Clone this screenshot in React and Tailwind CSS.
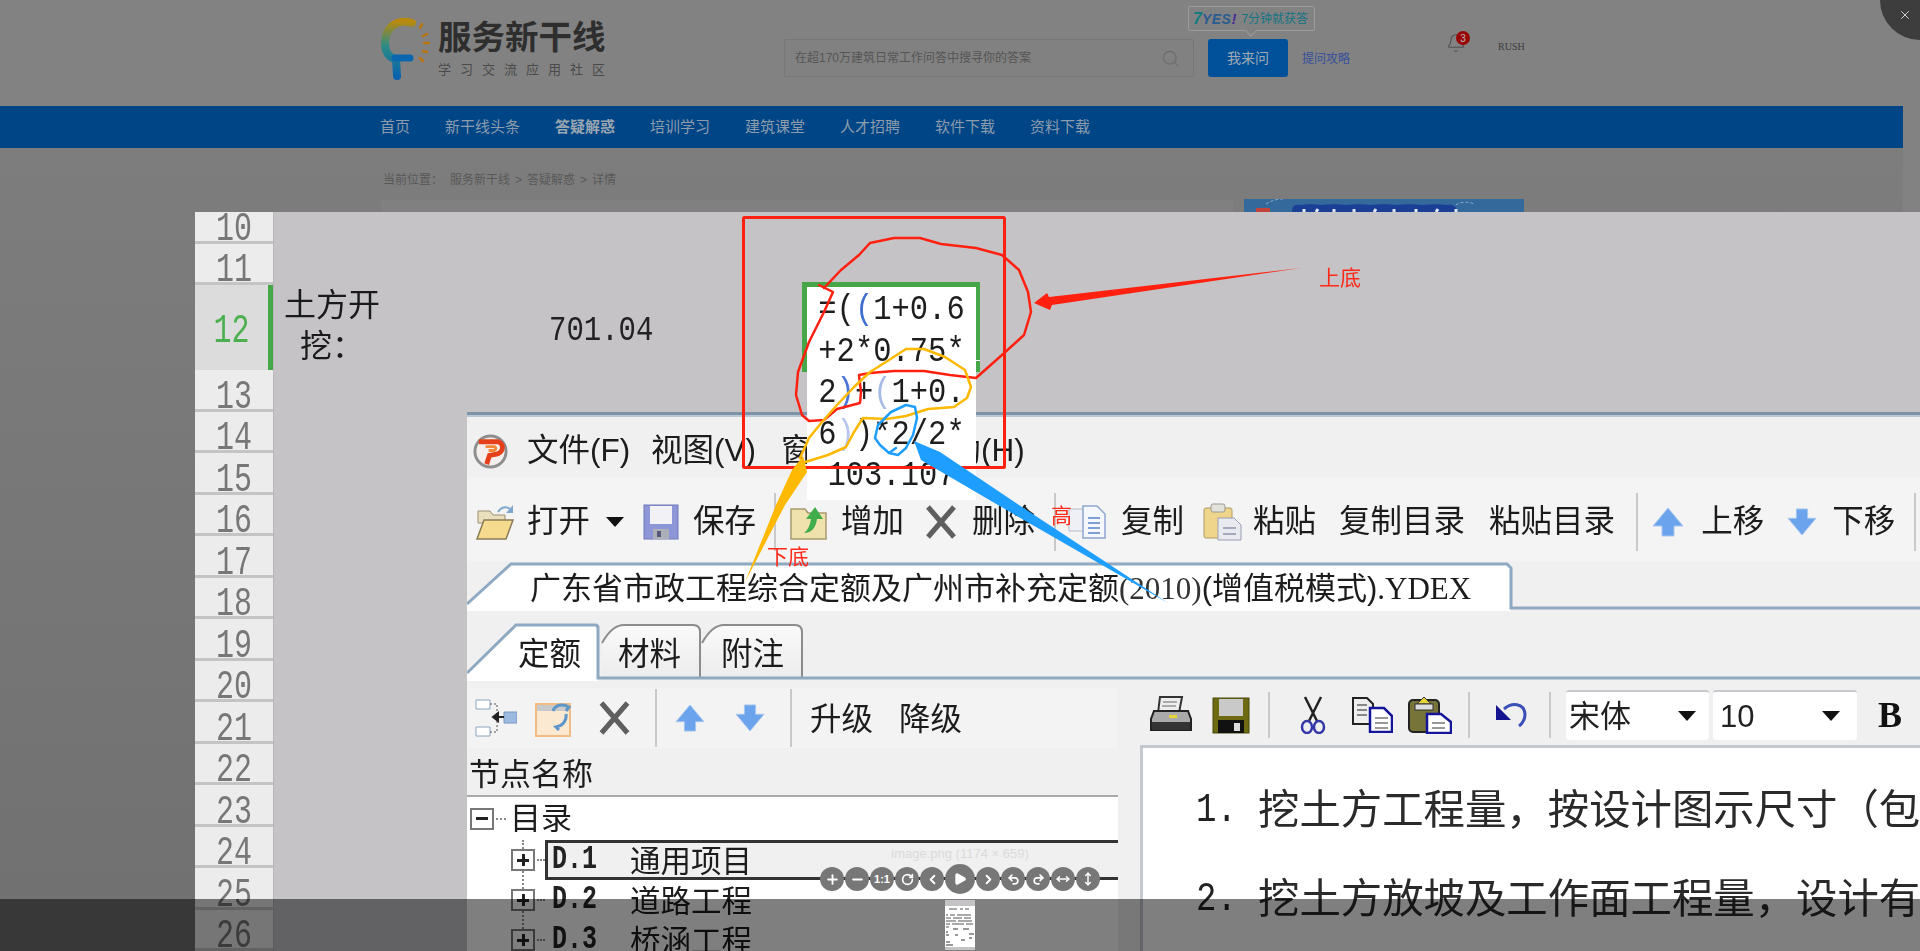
import React from "react"
import { Bell, ChevronLeft, ChevronRight, Minus, MoveHorizontal, MoveVertical, Play, Plus, Redo2, RotateCw, Search, Undo2, X } from "lucide-react"

const navItems = ["首页", "新干线头条", "答疑解惑", "培训学习", "建筑课堂", "人才招聘", "软件下载", "资料下载"]

// heights come from the spreadsheet rows in the picture
const sheetRows = [
  { n: 10, h: "h-[32px]" },
  { n: 11, h: "h-[41px]" },
  { n: 12, h: "h-[85px]", active: true },
  ...[13, 14, 15, 16, 17, 18, 19, 20, 21, 22, 23, 24, 25, 26].map((n) => ({ n, h: "h-[41.5px]" })),
]

const redLoop = "819,285 833,292 824,312 809,342 798,372 796,395 802,415 809,421 824,420 837,409 860,403 861,392 859,375 870,373 894,371 924,371 950,375 976,378 1002,355 1024,335 1031,312 1028,292 1019,270 1002,255 976,248 941,244 920,238 894,238 870,243 859,255 841,270 824,288"
const orangeLoop = "802,463 828,455 846,447 854,432 863,418 887,419 906,416 928,409 954,407 967,398 971,387 965,370 945,357 924,349 906,349 889,360 870,372 854,387 837,405 822,422 809,438 800,458"
const blueLoop = "896,448 889,453 880,445 875,438 878,425 891,412 906,405 915,407 917,418 913,435 906,448 898,455 889,453"

const Sep = ({ className = "" }) => <div className={`w-[2px] shrink-0 bg-[#c9c9c9] ${className}`} />

const Tool = ({ children, className = "" }) => (
  <span className={`shrink-0 text-[31.5px] leading-none whitespace-nowrap text-[#1c1c1c] ${className}`}>{children}</span>
)

const OpenIcon = ({ className }) => (
  <svg className={className} viewBox="0 0 40 38">
    <path d="M3 8h12l3 4h12v8H3z" fill="#e9dfbd" stroke="#9b9070" />
    <path d="M2 36 9 17h29l-7 19z" fill="#f6db8f" stroke="#8b7c55" strokeWidth="1.5" />
    <path d="M23 9c3-5 8-6 12-3" fill="none" stroke="#7fa8cf" strokeWidth="2" />
    <path d="M38 2v8h-7z" fill="#7fa8cf" />
  </svg>
)

const BlueDisk = ({ className }) => (
  <svg className={className} viewBox="0 0 36 36">
    <rect x="1" y="1" width="34" height="34" fill="#8d97d8" stroke="#7078b8" />
    <rect x="7" y="2" width="22" height="18" fill="#f2f2f6" />
    <rect x="10" y="25" width="16" height="10" fill="#aeb0b8" />
    <rect x="14" y="27" width="4" height="6" fill="#555a78" />
  </svg>
)

const AddIcon = ({ className }) => (
  <svg className={className} viewBox="0 0 40 38">
    <path d="M2 6h14l3 4h18v26H2z" fill="#efe2ad" stroke="#a89a70" strokeWidth="1.5" />
    <path d="M15 30c8 0 12-6 13-14h6L26 4l-9 12h5c-1 6-3 11-7 14z" fill="#3fae4a" />
  </svg>
)

const CrossIcon = ({ className }) => (
  <svg className={className} viewBox="0 0 32 34">
    <path d="M3 2l26 30M29 2 3 32" stroke="#5f5f5f" strokeWidth="5" />
  </svg>
)

const CopyDoc = ({ className }) => (
  <svg className={className} viewBox="0 0 40 36">
    <path d="M2 5h18v22H2z" fill="#eef0f6" stroke="#b6bccb" />
    <path d="M16 2h14l8 8v24H16z" fill="#f4f7fd" stroke="#8ea7cf" strokeWidth="1.5" />
    <path d="M21 14h12M21 19h12M21 24h12M21 29h12" stroke="#7f9fd6" strokeWidth="2" />
  </svg>
)

const PasteIcon = ({ className }) => (
  <svg className={className} viewBox="0 0 41 38">
    <rect x="2" y="5" width="28" height="30" rx="2" fill="#efd48c" stroke="#ad9a62" />
    <rect x="9" y="1" width="14" height="8" rx="2" fill="#e2e2dc" stroke="#9b9b8e" />
    <path d="M16 15h16l7 7v15H16z" fill="#e9eaf0" stroke="#9a9eb0" />
    <path d="M21 25h13M21 31h13" stroke="#a6aabd" strokeWidth="2" />
  </svg>
)

const ArrowUp = ({ className }) => (
  <svg className={className} viewBox="0 0 32 30">
    <path d="M16 1 31 19H22V29H10V19H1z" fill="#6ba4ec" stroke="#a9c7ee" />
  </svg>
)

const ArrowDown = ({ className }) => (
  <svg className={className} viewBox="0 0 32 30">
    <path d="M16 29 1 11H10V1H22V11H31z" fill="#6ba4ec" stroke="#a9c7ee" />
  </svg>
)

const TreeIcon = ({ className }) => (
  <svg className={className} viewBox="0 0 42 38">
    <path d="M1 1h14v9H1zM1 28h14v9H1z" fill="#fff" stroke="#8aa4c0" />
    <path d="M15 5h7v28h-7" fill="none" stroke="#555" strokeDasharray="2 2" />
    <path d="M29 13h13v11H29z" fill="#9dbbe0" stroke="#7796bd" />
    <path d="M18 18h11M18 18l5-4v8z" stroke="#222" fill="#222" strokeWidth="2" />
  </svg>
)

const RefreshDoc = ({ className }) => (
  <svg className={className} viewBox="0 0 39 38">
    <rect x="1" y="5" width="34" height="32" fill="#fbe9d2" stroke="#f1bd84" strokeWidth="2" />
    <rect x="2" y="6" width="32" height="6" fill="#c9c9c9" />
    <path d="M18 12c2-6 9-8 16-4l-3 4M31 15c1 6-3 12-10 13l3 3" fill="none" stroke="#5f96c8" strokeWidth="3" />
  </svg>
)

const Printer = ({ className }) => (
  <svg className={className} viewBox="0 0 42 38">
    <path d="M10 1h22l-3 16H8z" fill="#eee" stroke="#333" strokeWidth="2" />
    <path d="M13 6h14M12 10h14" stroke="#666" />
    <path d="M4 15h34l3 8v11H1V23z" fill="#aaa" stroke="#222" strokeWidth="2" />
    <path d="M2 26h38v8H2z" fill="#333" />
    <rect x="19" y="19" width="8" height="3" fill="#e6d23a" />
  </svg>
)

const DarkDisk = ({ className }) => (
  <svg className={className} viewBox="0 0 38 37">
    <rect x="1" y="1" width="36" height="35" fill="#6d6a12" stroke="#4b4908" />
    <rect x="7" y="2" width="24" height="17" fill="#c9c9c9" />
    <rect x="6" y="23" width="26" height="13" fill="#111" />
    <rect x="22" y="26" width="6" height="8" fill="#ddd" />
  </svg>
)

const Scissors = ({ className }) => (
  <svg className={className} viewBox="0 0 26 38">
    <path d="M5 1l12 24M21 1 9 25" stroke="#222" strokeWidth="2.5" />
    <ellipse cx="7" cy="31" rx="5" ry="6" fill="none" stroke="#3538a8" strokeWidth="2.5" />
    <ellipse cx="19" cy="31" rx="5" ry="6" fill="none" stroke="#3538a8" strokeWidth="2.5" />
  </svg>
)

const BlueCopy = ({ className }) => (
  <svg className={className} viewBox="0 0 41 36">
    <path d="M1 1h14l6 6v20H1z" fill="#eee" stroke="#222" strokeWidth="2" />
    <path d="M5 8h10M5 13h10M5 18h10" stroke="#222" />
    <path d="M18 11h14l8 8v16H18z" fill="#fff" stroke="#15159a" strokeWidth="2.5" />
    <path d="M23 21h13M23 26h13M23 31h13" stroke="#333" />
  </svg>
)

const OlivePaste = ({ className }) => (
  <svg className={className} viewBox="0 0 44 38">
    <rect x="1" y="4" width="30" height="32" rx="4" fill="#77743a" stroke="#222" strokeWidth="2" />
    <path d="M9 8 16 1l7 7z" fill="#e6d23a" stroke="#333" />
    <rect x="7" y="8" width="18" height="6" fill="#ddd" stroke="#333" />
    <path d="M19 18h14l10 8v11H19z" fill="#fff" stroke="#15159a" strokeWidth="2.5" />
    <path d="M24 27h13M24 32h13" stroke="#333" />
  </svg>
)

const UndoIcon = ({ className }) => (
  <svg className={className} viewBox="0 0 33 28">
    <path d="M9 8c8-7 20-6 21 5 0 5-2 9-6 12" fill="none" stroke="#3a50b8" strokeWidth="3" />
    <path d="M1 4v15h15z" fill="#14148f" />
  </svg>
)

const PLogo = ({ className }) => (
  <svg className={className} viewBox="0 0 36 36">
    <circle cx="18" cy="18" r="16" fill="#f4efec" stroke="#8e8e8e" strokeWidth="3" />
    <path d="M6 8h20c7 3 5 12-3 13l-6 1-3 9" fill="none" stroke="#e5401b" strokeWidth="5" />
    <path d="M13 13h9c2 1 2 3 0 4h-6" fill="none" stroke="#f28a3a" strokeWidth="3" />
  </svg>
)

const Caret = ({ className = "" }) => (
  <span className={`h-0 w-0 shrink-0 border-x-[9px] border-t-[10px] border-x-transparent border-t-[#111] ${className}`} />
)

const Expander = ({ open, className = "" }) => (
  <span className={`relative flex h-[22px] w-[24px] shrink-0 items-center justify-center border-2 border-[#777] bg-white ${className}`}>
    <span className="absolute h-[3px] w-[12px] bg-[#222]" />
    {!open && <span className="absolute h-[12px] w-[3px] bg-[#222]" />}
  </span>
)

const TreeRow = ({ code, name, selected }) => (
  <div className="flex h-[40px] shrink-0 items-center pl-[44px]">
    <Expander />
    <span className="ml-[2px] w-[8px] shrink-0 border-t-2 border-dotted border-[#888]" />
    <div className={`flex h-[40px] flex-1 items-center pl-[4px] ${selected ? "border-y-[3px] border-l-[3px] border-[#333] bg-[#f0f0f0]" : "pl-[7px]"}`}>
      <span className="w-[78px] shrink-0 scale-y-[1.3] font-['Liberation_Mono',monospace] text-[25px] font-bold text-[#222]">{code}</span>
      <span className="pt-[2px] text-[30.5px] leading-none whitespace-nowrap text-[#1c1c1c]">{name}</span>
    </div>
  </div>
)

const Logo = () => (
  <div className="mt-[17px] flex w-[226px] shrink-0">
    <svg className="h-[64px] w-[50px] shrink-0" viewBox="0 0 50 64">
      <defs>
        <linearGradient id="logoGrad" x1="0" y1="0" x2="0" y2="1">
          <stop offset="0" stopColor="#b88a10" />
          <stop offset="0.45" stopColor="#2b8c86" />
          <stop offset="1" stopColor="#0a62ac" />
        </linearGradient>
      </defs>
      <path d="M32 6C16 1 5 12 5 26c0 9 4 15 11 16l1 17" fill="none" stroke="url(#logoGrad)" strokeWidth="8" strokeLinecap="round" />
      <path d="M15 41h15" stroke="#0a66ae" strokeWidth="7" strokeLinecap="round" />
      <path d="M40 11l2-4M43 19l4-2M44 26h5M43 34l4 1M40 41l3 3" stroke="#b8740f" strokeWidth="2.5" strokeLinecap="round" />
    </svg>
    <div className="ml-[8px] flex flex-col">
      <span className="mt-[2px] text-[33.5px] leading-[38px] font-bold tracking-[0px] whitespace-nowrap text-[#2e2e2e]">服务新干线</span>
      <span className="mt-[5px] text-[13px] leading-[16px] tracking-[9px] whitespace-nowrap text-[#4a4a4a]">学习交流应用社区</span>
    </div>
  </div>
)

const PageBehind = () => (
  <div className="h-[951px] w-[1903px] overflow-hidden">
    <header className="relative flex h-[106px] bg-[#828282] pl-[380px]">
      <Logo />
      <div className="mt-[39px] ml-[178px] flex h-[38px] w-[410px] shrink-0 items-center justify-between rounded-[2px] border border-[#777] bg-[#818181] px-[10px]">
        <span className="text-[12px] text-[#555]">在超170万建筑日常工作问答中搜寻你的答案</span>
        <Search className="mr-[3px] h-[19px] w-[19px] text-[#6c6c6c]" strokeWidth={1.5} />
      </div>
      <div className="mt-[39px] ml-[14px] flex h-[38px] w-[80px] shrink-0 items-center justify-center rounded-[3px] bg-[#005199] text-[14px] text-[#9fa9b3]">我来问</div>
      <span className="mt-[51px] ml-[14px] shrink-0 text-[12px] leading-[16px] text-[#35509c]">提问攻略</span>
      <div className="relative mt-[32px] ml-[96px] h-[22px] w-[22px] shrink-0">
        <Bell className="h-[22px] w-[20px] text-[#4f4f4f]" strokeWidth={1.3} />
        <span className="absolute -top-[1px] left-[10px] flex h-[14px] w-[14px] items-center justify-center rounded-full bg-[#990505] text-[10px] text-[#bbb]">3</span>
      </div>
      <span className="mt-[40px] ml-[30px] font-['Liberation_Serif',serif] text-[10px] leading-[14px] text-[#3c3c3c]">RUSH</span>
      <div className="absolute top-[6px] left-[1188px] flex h-[25px] w-[127px] items-center rounded-[2px] border border-[#9c9c9c] pl-[4px]">
        <span className="text-[16px] leading-none font-bold text-[#127c80] italic">7</span>
        <span className="text-[14px] leading-none font-bold tracking-[0.5px] text-[#2a5c90] italic">YES</span>
        <span className="mr-[5px] text-[15px] leading-none font-bold text-[#4a2c98] italic">!</span>
        <span className="text-[12px] leading-none whitespace-nowrap text-[#137484]">7分钟就获答</span>
        <span className="absolute -bottom-[5px] left-[58px] h-[8px] w-[8px] rotate-45 border-r border-b border-[#9c9c9c] bg-[#828282]" />
      </div>
    </header>
    <nav className="flex h-[42px] items-center gap-[35px] bg-[#004585] pl-[380px] text-[15px] text-[#8b9cad]">
      {navItems.map((item) => (
        <span key={item} className={item === "答疑解惑" ? "font-bold text-[#9aa6b2]" : ""}>{item}</span>
      ))}
    </nav>
    <div className="h-full bg-gradient-to-b from-[#7d7d7d] to-[#6e6e6e] pl-[383px]">
      <div className="flex h-[52px] items-center gap-[5px] pt-[12px] text-[12px] text-[#585858]">
        <span className="mr-[2px]">当前位置：</span>
        <span>服务新干线</span><span>&gt;</span><span>答疑解惑</span><span>&gt;</span><span>详情</span>
      </div>
      <div className="-ml-[2px] flex gap-[11px]">
        <div className="h-[20px] w-[852px] bg-[#808080]" />
        <svg className="h-[13px] w-[280px] -translate-y-[1px]" viewBox="0 0 280 13">
          <rect width="280" height="13" fill="#33699b" />
          <path d="M22 5c6-4 12-5 17-5M212 6c3-3 12-4 18-1" fill="none" stroke="#8fa9c2" strokeDasharray="3 2" />
          <path d="M48 13c0-7 4-8 9-7 8-1 14-1 20 0 8-1 18-1 25 0 10-1 16-1 24 0 10-1 16-1 26 0 10-1 18-1 27 0 8-1 17-1 24 0 6-1 9 1 11 7z" fill="#1b3f94" />
          <rect x="12" y="9" width="14" height="4" fill="#c2433b" />
          <path d="M60 13v-3M72 13l2-3M90 13v-3M110 13v-3M130 13l2-3M150 13v-3M172 13v-3M192 13l2-3M212 13v-3" stroke="#dfe6f0" strokeWidth="3" />
        </svg>
      </div>
    </div>
  </div>
)

const Gutter = () => (
  <div className="flex w-[79px] shrink-0 flex-col border-r-[1px] border-[#b8b6b9]">
    {sheetRows.map((row) => (
      <div
        key={row.n}
        className={`flex shrink-0 justify-center font-['Liberation_Mono',monospace] text-[30px] leading-[28px] ${row.h} ${
          row.active
            ? "items-center border-r-[5px] border-[#46a749] bg-[#dcdcdc] pt-[6px] text-[#4caf50]"
            : "items-end border-b-[3px] border-[#c4c4c4] bg-[#ececec] text-[#777]"
        }`}
      >
        <div className={`scale-y-[1.35] ${row.active ? "" : "translate-y-[2px]"}`}>{row.n}</div>
      </div>
    ))}
  </div>
)

const SheetCells = () => (
  <div className="flex h-[85px] pt-0">
    <div className="ml-[10px] w-[96px] shrink-0 text-center text-[32px] leading-[41px] text-[#1a1a1a]">
      土方开<br />挖：
    </div>
    <div className="ml-[169px] flex scale-y-[1.2] items-center pt-[6px] font-['Liberation_Mono',monospace] text-[29px] text-[#222]">701.04</div>
  </div>
)

const FormulaCell = () => (
  <div className="absolute top-[70px] left-[607px] w-[178px]">
    <div className="h-[90px] border-[5px] border-b-0 border-[#46a749]" />
    <div className="absolute top-[78px] right-0 h-[1px] w-[5px] bg-white" />
    <div className="absolute top-[5px] left-[5px] w-[169px] bg-white pt-[3px] pb-[2px] text-center font-['Liberation_Mono',monospace] text-[30.5px] leading-[41.5px] whitespace-nowrap text-[#1e1e1e]">
      <div className="scale-y-[1.15]">=(<span className="text-[#3f6fd0]">(</span>1+0.6</div>
      <div className="scale-y-[1.15]">+2*0.75*</div>
      <div className="scale-y-[1.15]">2<span className="text-[#4a74d8]">)</span>+<span className="text-[#a6bae6]">(</span>1+0.</div>
      <div className="scale-y-[1.15]">6<span className="text-[#b6c6ef]">)</span>)*2/2*</div>
      <div className="scale-y-[1.15]">103.107</div>
    </div>
  </div>
)

const FileTabs = () => (
  <>
    <div className="relative flex h-[50px] shrink-0 items-center pl-[63px]">
      <svg className="absolute inset-0 h-[50px] w-[1453px]" viewBox="0 0 1453 50">
        <path d="M0 43 44 3H1040l4 4V50H0z" fill="#fff" />
        <path d="M0 43 44 3H1040l4 4V47H1453" fill="none" stroke="#8fa9c2" strokeWidth="3" />
      </svg>
      <span className="relative pt-[4px] text-[31px] leading-none whitespace-nowrap text-[#1c1c1c]">
        广东省市政工程综合定额及广州市补充定额<span className="font-['Liberation_Serif',serif] text-[#333]">(2010)</span>(增值税模式)<span className="font-['Liberation_Serif',serif]">.YDEX</span>
      </span>
    </div>
    <div className="h-[10px] shrink-0" />
    <div className="relative flex h-[60px] shrink-0 items-center pt-[8px]">
      <svg className="absolute inset-0 h-[60px] w-[1453px]" viewBox="0 0 1453 60">
        <defs>
          <linearGradient id="tabGrad" x1="0" y1="0" x2="0" y2="1">
            <stop offset="0" stopColor="#fafafa" />
            <stop offset="1" stopColor="#ececec" />
          </linearGradient>
        </defs>
        <path d="M0 52 49 4H128q3 0 3 3V60H0z" fill="#fff" />
        <path d="M135 22q10-18 22-18H226q7 0 7 7V57H135z" fill="url(#tabGrad)" />
        <path d="M235 22q10-18 22-18H328q7 0 7 7V57H235z" fill="url(#tabGrad)" />
        <path d="M135 22q10-18 22-18H226q7 0 7 7V57M235 22q10-18 22-18H328q7 0 7 7V57" fill="none" stroke="#8c8c8c" strokeWidth="2" />
        <path d="M0 52 49 4H128q3 0 3 3V57H1453" fill="none" stroke="#8fa9c2" strokeWidth="3" />
      </svg>
      <Tool className="relative ml-[51px]">定额</Tool>
      <Tool className="relative ml-[37px]">材料</Tool>
      <Tool className="relative ml-[40px]">附注</Tool>
    </div>
  </>
)

const TreePane = () => (
  <div className="flex w-[651px] shrink-0 flex-col pt-[7px]">
    <div className="flex h-[60px] shrink-0 items-center bg-[#f3f3f3] pl-[8px]">
      <TreeIcon className="h-[38px] w-[42px] shrink-0" />
      <RefreshDoc className="ml-[18px] h-[38px] w-[39px] shrink-0" />
      <CrossIcon className="ml-[24px] h-[34px] w-[33px] shrink-0" />
      <Sep className="ml-[24px] h-[58px]" />
      <ArrowUp className="ml-[17px] h-[28px] w-[32px] shrink-0" />
      <ArrowDown className="ml-[28px] h-[28px] w-[32px] shrink-0" />
      <Sep className="ml-[24px] h-[58px]" />
      <Tool className="ml-[18px] pt-[4px]">升级</Tool>
      <Tool className="ml-[26px] pt-[4px]">降级</Tool>
    </div>
    <div className="flex h-[49px] shrink-0 items-center border-b-2 border-[#aaa] pt-[6px] pl-[2px] text-[31px] leading-none text-[#1c1c1c]">节点名称</div>
    <div className="relative flex-1 bg-white">
      <div className="absolute top-[43px] bottom-0 left-[55px] border-l-2 border-dotted border-[#888]" />
      <div className="flex h-[43px] items-center pl-[3px]">
        <Expander open />
        <span className="ml-[2px] w-[10px] shrink-0 border-t-2 border-dotted border-[#888]" />
        <span className="ml-[4px] text-[31px] leading-none text-[#1c1c1c]">目录</span>
      </div>
      <div className="relative flex flex-col">
        <TreeRow code="D.1" name="通用项目" selected />
        <TreeRow code="D.2" name="道路工程" />
        <TreeRow code="D.3" name="桥涵工程" />
      </div>
    </div>
  </div>
)

const EditorPane = () => (
  <div className="ml-[22px] flex flex-1 flex-col overflow-hidden pt-[6px]">
    <div className="flex h-[56px] shrink-0 items-center bg-[#f0f0f0] pl-[10px]">
      <Printer className="h-[38px] w-[42px] shrink-0" />
      <DarkDisk className="ml-[20px] h-[37px] w-[38px] shrink-0" />
      <Sep className="ml-[18px] h-[46px] bg-[#bcbcbc]" />
      <Scissors className="ml-[30px] h-[38px] w-[26px] shrink-0" />
      <BlueCopy className="ml-[26px] h-[36px] w-[41px] shrink-0" />
      <OlivePaste className="ml-[15px] h-[38px] w-[44px] shrink-0" />
      <Sep className="ml-[16px] h-[46px] bg-[#bcbcbc]" />
      <UndoIcon className="ml-[25px] h-[28px] w-[33px] shrink-0" />
      <Sep className="ml-[21px] h-[46px] bg-[#bcbcbc]" />
      <div className="ml-[15px] flex h-[50px] w-[143px] shrink-0 items-center rounded-[3px] border-t-2 border-[#c8c8cf] bg-white pl-[3px]">
        <span className="text-[31px] leading-none text-[#222]">宋体</span>
        <Caret className="ml-[47px]" />
      </div>
      <div className="ml-[4px] flex h-[50px] w-[144px] shrink-0 items-center rounded-[3px] border-t-2 border-[#c8c8cf] bg-white pl-[7px]">
        <span className="text-[31px] leading-none text-[#222]">10</span>
        <Caret className="ml-[68px]" />
      </div>
      <span className="ml-[21px] font-['Liberation_Serif',serif] text-[36px] leading-none font-bold text-[#111]">B</span>
    </div>
    <div className="mt-[2px] flex-1 border-t-[3px] border-l-[3px] border-[#c4c8cf] bg-white pt-[41px] pl-[53px] text-[41.4px] whitespace-nowrap text-[#2a2a2a]">
      <div className="flex h-[89px] items-start leading-[42px]">
        <span className="w-[62px] shrink-0 scale-y-[1.2] font-['Liberation_Mono',monospace] text-[34px] text-[#222]">1.</span>
        <span>挖土方工程量，按设计图示尺寸（包括放坡</span>
      </div>
      <div className="flex h-[87px] items-start leading-[42px]">
        <span className="w-[62px] shrink-0 scale-y-[1.2] font-['Liberation_Mono',monospace] text-[34px] text-[#222]">2.</span>
        <span>挖土方放坡及工作面工程量，设计有规定</span>
      </div>
    </div>
  </div>
)

const SoftwareWindow = () => (
  <div className="absolute top-[200px] right-0 bottom-0 left-[272px] flex flex-col bg-[#f0f0f0]">
    <div className="h-[5px] shrink-0 border-t-[3px] border-[#7e93a5] bg-[#b8c8d4]" />
    <div className="flex h-[60px] shrink-0 items-center pt-[8px] pl-[6px]">
      <PLogo className="h-[35px] w-[35px] shrink-0" />
      <Tool className="ml-[19px] w-[124px]">文件(F)</Tool>
      <Tool className="w-[130px]">视图(V)</Tool>
      <Tool className="w-[137px]">窗口(W)</Tool>
      <Tool>帮助(H)</Tool>
    </div>
    <div className="flex h-[84px] shrink-0 items-center bg-[#f4f4f4] pt-[5px] pl-[8px]">
      <OpenIcon className="h-[38px] w-[40px] shrink-0" />
      <Tool className="ml-[12px]">打开</Tool>
      <Caret className="ml-[16px]" />
      <BlueDisk className="ml-[19px] h-[36px] w-[36px] shrink-0" />
      <Tool className="ml-[14px]">保存</Tool>
      <Sep className="ml-[18px] h-[58px]" />
      <AddIcon className="ml-[13px] h-[38px] w-[40px] shrink-0" />
      <Tool className="ml-[12px]">增加</Tool>
      <CrossIcon className="ml-[21px] h-[34px] w-[32px] shrink-0" />
      <Tool className="ml-[15px]">删除</Tool>
      <Sep className="ml-[19px] h-[58px]" />
      <CopyDoc className="ml-[11px] h-[36px] w-[40px] shrink-0" />
      <Tool className="ml-[14px]">复制</Tool>
      <PasteIcon className="ml-[18px] h-[38px] w-[41px] shrink-0" />
      <Tool className="ml-[10px]">粘贴</Tool>
      <Tool className="ml-[23px]">复制目录</Tool>
      <Tool className="ml-[24px]">粘贴目录</Tool>
      <Sep className="ml-[21px] h-[58px]" />
      <ArrowUp className="ml-[14px] h-[30px] w-[32px] shrink-0" />
      <Tool className="ml-[17px]">上移</Tool>
      <ArrowDown className="ml-[22px] h-[28px] w-[32px] shrink-0" />
      <Tool className="ml-[14px]">下移</Tool>
      <Sep className="ml-[19px] h-[58px]" />
    </div>
    <FileTabs />
    <div className="flex min-h-0 flex-1">
      <TreePane />
      <EditorPane />
    </div>
  </div>
)

// hand drawn marks on the screenshot, kept in page coordinates
const Annotations = () => (
  <>
    <svg className="absolute inset-0 h-[739px] w-[1725px]" viewBox="195 212 1725 739" fill="none">
      <rect x="743.5" y="217.5" width="261" height="250" rx="1" stroke="#ff2010" strokeWidth="3" />
      <polyline points={redLoop} stroke="#ff2010" strokeWidth="2.5" strokeLinejoin="round" strokeLinecap="round" />
      <polygon points="1034,303 1047,293 1049,297 1301,268 1052,305 1050,310" fill="#ff2010" />
      <polyline points={orangeLoop} stroke="#ffb900" strokeWidth="2.5" strokeLinejoin="round" strokeLinecap="round" />
      <polygon points="803,456 807,472 785,505 745,582 776,505 792,470" fill="#ffb900" />
      <polyline points={blueLoop} stroke="#1e9fff" strokeWidth="2.5" strokeLinejoin="round" strokeLinecap="round" />
      <polygon points="914,441 940,452 1019,505 1168,603 998,505 921,460" fill="#1e9fff" />
    </svg>
    <span className="absolute top-[54px] left-[1124px] text-[21px] leading-[24px] text-[#ff2a1a]">上底</span>
    <span className="absolute top-[333px] left-[572px] text-[21px] leading-[24px] text-[#ff2a1a]">下底</span>
    <span className="absolute top-[292px] left-[856px] text-[21px] leading-[24px] text-[#ff2a1a]">高</span>
  </>
)

const RoundBtn = ({ big, children }) => (
  <button className={`flex shrink-0 items-center justify-center rounded-full bg-[#777] text-white ${big ? "h-[30px] w-[30px]" : "h-[24px] w-[24px]"}`}>
    {children}
  </button>
)

const ViewerToolbar = () => (
  <div className="flex items-center gap-px">
    <RoundBtn><Plus size={15} strokeWidth={3} /></RoundBtn>
    <RoundBtn><Minus size={15} strokeWidth={3} /></RoundBtn>
    <RoundBtn><span className="text-[11px] font-bold">1:1</span></RoundBtn>
    <RoundBtn><RotateCw size={13} strokeWidth={3} /></RoundBtn>
    <RoundBtn><ChevronLeft size={15} strokeWidth={3} /></RoundBtn>
    <RoundBtn big><Play size={14} fill="#fff" strokeWidth={2} /></RoundBtn>
    <RoundBtn><ChevronRight size={15} strokeWidth={3} /></RoundBtn>
    <RoundBtn><Undo2 size={13} strokeWidth={3} /></RoundBtn>
    <RoundBtn><Redo2 size={13} strokeWidth={3} /></RoundBtn>
    <RoundBtn><MoveHorizontal size={14} strokeWidth={2.5} /></RoundBtn>
    <RoundBtn><MoveVertical size={14} strokeWidth={2.5} /></RoundBtn>
  </div>
)

const Thumb = () => (
  <svg className="h-[50px] w-[30px]" viewBox="0 0 30 50">
    <rect width="30" height="50" fill="#fff" />
    <rect width="30" height="6" fill="#c5c3c6" />
    <rect y="47" width="30" height="3" fill="#c5c3c6" />
    <path d="M4 9h8M15 9h3M20 9h4M1 15h2M5 15h5M12 15h14M1 18h5M8 18h9M19 18h7M1 21h10M13 21h14M1 24h4M7 24h12M21 24h7M1 27h3" stroke="#555" />
    <path d="M1 32h2M8 29h5M18 29h6M1 35h3M10 35h3M24 34h5M24 38h3M16 40h4M1 42h4M1 45h7" stroke="#333" />
  </svg>
)

export default function App() {
  return (
    <div className="relative h-[951px] w-[1920px] overflow-hidden bg-[#828282] font-['Liberation_Sans','Noto_Sans_CJK_SC',sans-serif]">
      <PageBehind />

      {/* image viewer on top of the page */}
      <div className="absolute top-[212px] right-0 bottom-0 left-[195px] flex overflow-hidden bg-[#c5c3c6] blur-[0.7px]">
        <Gutter />
        <div className="flex-1 pt-[73px]">
          <SheetCells />
        </div>
        <SoftwareWindow />
        <FormulaCell />
        <Annotations />
      </div>

      <div className="absolute -top-[40px] -right-[40px] flex h-[80px] w-[80px] items-end justify-start rounded-full bg-[#3d3d3d] pb-[18px] pl-[18px] text-white">
        <X size={14} strokeWidth={1.3} />
      </div>

      <div className="absolute right-0 bottom-0 left-0 flex flex-col items-center">
        <span className="h-[20px] text-[13px] leading-[20px] text-[#dadada]">image.png (1174 × 659)</span>
        <ViewerToolbar />
        <div className="mt-[5px] flex h-[52px] w-full justify-center bg-black/50 pt-[1px]">
          <Thumb />
        </div>
      </div>
    </div>
  )
}
